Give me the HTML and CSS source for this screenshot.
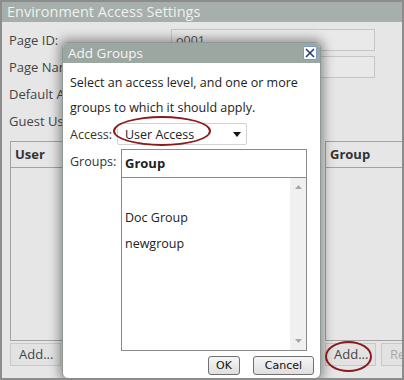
FILE: index.html
```html
<!DOCTYPE html>
<html>
<head>
<meta charset="utf-8">
<link rel="stylesheet" href="styles.css">
</head>
<body>
<div class="frame">
  <div class="panel-title">Environment Access Settings</div>
  <div class="panel-body">
    <div class="form">
      <div class="row"><span class="lbl">Page ID:</span><span class="input">o001</span></div>
      <div class="row"><span class="lbl">Page Name:</span><span class="input"></span></div>
      <div class="row"><span class="lbl">Default Access:</span></div>
      <div class="row"><span class="lbl">Guest User:</span></div>
    </div>
    <div class="tables">
      <div class="tcol">
        <div class="table"><div class="thead">User</div></div>
        <div class="btns"><span class="btn">Add...</span></div>
      </div>
      <div class="tcol">
        <div class="table"><div class="thead">Group</div></div>
        <div class="btns"><span class="btn">Add...</span><span class="btn dim">Re</span></div>
      </div>
    </div>
  </div>

  <div class="dialog">
    <div class="dlg-title">
      <span>Add Groups</span>
      <span class="close"><svg width="12" height="12" viewBox="0 0 12 12"><path d="M2 2 L10 10 M10 2 L2 10" stroke="#23407a" stroke-width="1.6" fill="none"/></svg></span>
    </div>
    <div class="dlg-body">
      <p class="intro">Select an access level, and one or more groups to which it should apply.</p>
      <div class="frow">
        <span class="flbl">Access:</span>
        <span class="select"><span>User Access</span><svg width="8" height="5" viewBox="0 0 8 5"><path d="M0 0 H8 L4 5 Z" fill="#111"/></svg></span>
      </div>
      <div class="frow grp">
        <span class="flbl">Groups:</span>
        <div class="listbox">
          <div class="lhead">Group</div>
          <div class="lbody">
            <div class="items">
              <div class="item"></div>
              <div class="item">Doc Group</div>
              <div class="item">newgroup</div>
            </div>
            <div class="scroll">
              <svg width="7" height="4" viewBox="0 0 7 4"><path d="M0 4 H7 L3.5 0 Z" fill="#a8a8a8"/></svg>
              <svg width="7" height="4" viewBox="0 0 7 4"><path d="M0 0 H7 L3.5 4 Z" fill="#a8a8a8"/></svg>
            </div>
          </div>
        </div>
      </div>
      <div class="dlg-btns"><span class="wbtn ok">OK</span><span class="wbtn cancel">Cancel</span></div>
    </div>
  </div>

  <div class="ellipse e1"></div>
  <div class="ellipse e2"></div>
</div>
</body>
</html>
```

FILE: styles.css
```css
* { box-sizing: border-box; }
html, body { margin: 0; padding: 0; }
body { font-family: "Open Sans", "Noto Sans", sans-serif; font-size: 12.5px; }

.frame {
  position: relative;
  width: 404px;
  height: 380px;
  border: 2px solid #8c8c8c;
  background: #e6e6e6;
  overflow: hidden;
  color: #3a3a3a;
}

.panel-title {
  height: 20px;
  background: #a6afab;
  color: #eef1ef;
  font-size: 14.5px;
  line-height: 20px;
  padding-left: 5px;
  white-space: nowrap;
}

.panel-body { padding: 7px 0 0 7px; }

.form { display: flex; flex-direction: column; gap: 5px; }
.row { display: flex; align-items: center; height: 22px; }
.lbl { width: 162px; color: #444; font-size: 13px; white-space: nowrap; }
.input {
  width: 204px;
  height: 22px;
  border: 1px solid #c6c6c6;
  background: #e9e9e9;
  padding: 2px 4px;
  color: #555;
}

.tables { display: flex; gap: 10px; margin: 9px 0 0 1px; width: 620px; }
.tcol { width: 305px; flex: none; }
.table {
  height: 200px;
  border: 1px solid #a2a2a2;
  background: #e6e6e6;
}
.thead {
  height: 26px;
  border-bottom: 1px solid #a2a2a2;
  font-weight: bold;
  font-size: 13px;
  line-height: 25px;
  padding-left: 4px;
  color: #333;
}
.btns { display: flex; gap: 5px; margin-top: 2px; }
.btn {
  height: 23px;
  width: 51px;
  padding: 0 0 0 8px;
  border: 1px solid #c9c9c9;
  background: #e2e2e2;
  color: #444;
  line-height: 21px;
  font-size: 13px;
  white-space: nowrap;
}
.btn.dim { color: #aaa; width: 40px; }

.dialog {
  position: absolute;
  left: 60px;
  top: 40px;
  width: 259px;
  height: 337px;
  background: #fff;
  border-radius: 6px;
  border: 1px solid #8d9893;
  box-shadow: 0 0 11px 3px rgba(0,0,0,0.38);
  overflow: hidden;
  color: #222;
}
.dlg-title {
  height: 20px;
  background: #9ca7a2;
  color: #f4f6f5;
  font-size: 13.5px;
  line-height: 19px;
  padding: 0 3px 0 5px;
  display: flex;
  justify-content: space-between;
  align-items: center;
}
.close {
  width: 14px;
  height: 14px;
  background: #fff;
  border: 1px solid #7d9ac8;
  border-radius: 2px;
  display: flex;
  align-items: center;
  justify-content: center;
}
.dlg-body { padding: 7px 0 0 7px; }
.intro { margin: 0; line-height: 25px; width: 245px; }
.frow { display: flex; align-items: center; margin-top: 3px; }
.flbl { color: #333; width: 47px; }
.select {
  width: 130px;
  height: 22px;
  border: 1px solid #d2d2d2;
  border-radius: 2px;
  display: flex;
  align-items: center;
  justify-content: space-between;
  padding: 0 5px 0 7px;
}
.frow.grp { align-items: flex-start; margin-top: 4px; }
.frow.grp .flbl { width: 51px; padding-top: 4px; }
.listbox {
  width: 186px;
  height: 202px;
  border: 1px solid #8a8a8a;
  display: flex;
  flex-direction: column;
}
.lhead {
  height: 28px;
  border-bottom: 1px solid #8a8a8a;
  font-weight: bold;
  font-size: 13px;
  line-height: 27px;
  padding-left: 3px;
}
.lbody { flex: 1; display: flex; }
.items { flex: 1; padding-top: 1px; }
.item { height: 26px; line-height: 26px; padding-left: 3px; }
.scroll {
  width: 16px;
  background: #f0f0f0;
  display: flex;
  flex-direction: column;
  justify-content: space-between;
  align-items: center;
  padding: 7px 0 7px;
}
.dlg-btns { display: flex; justify-content: flex-end; gap: 13px; padding-right: 6px; margin-top: 5px; }
.wbtn {
  height: 19px;
  border: 1px solid #707070;
  border-radius: 3px;
  background: linear-gradient(#f6f6f6, #dedede);
  line-height: 17px;
  text-align: center;
  font-family: "DejaVu Sans", sans-serif;
  font-size: 11px;
  color: #111;
}
.ok { width: 32px; }
.cancel { width: 61px; }

.ellipse {
  position: absolute;
  border: 2px solid #8b1a1a;
  border-radius: 50%;
}
.e1 { left: 111px; top: 114px; width: 98px; height: 30px; }
.e2 { left: 323px; top: 339px; width: 47px; height: 31px; }
```
